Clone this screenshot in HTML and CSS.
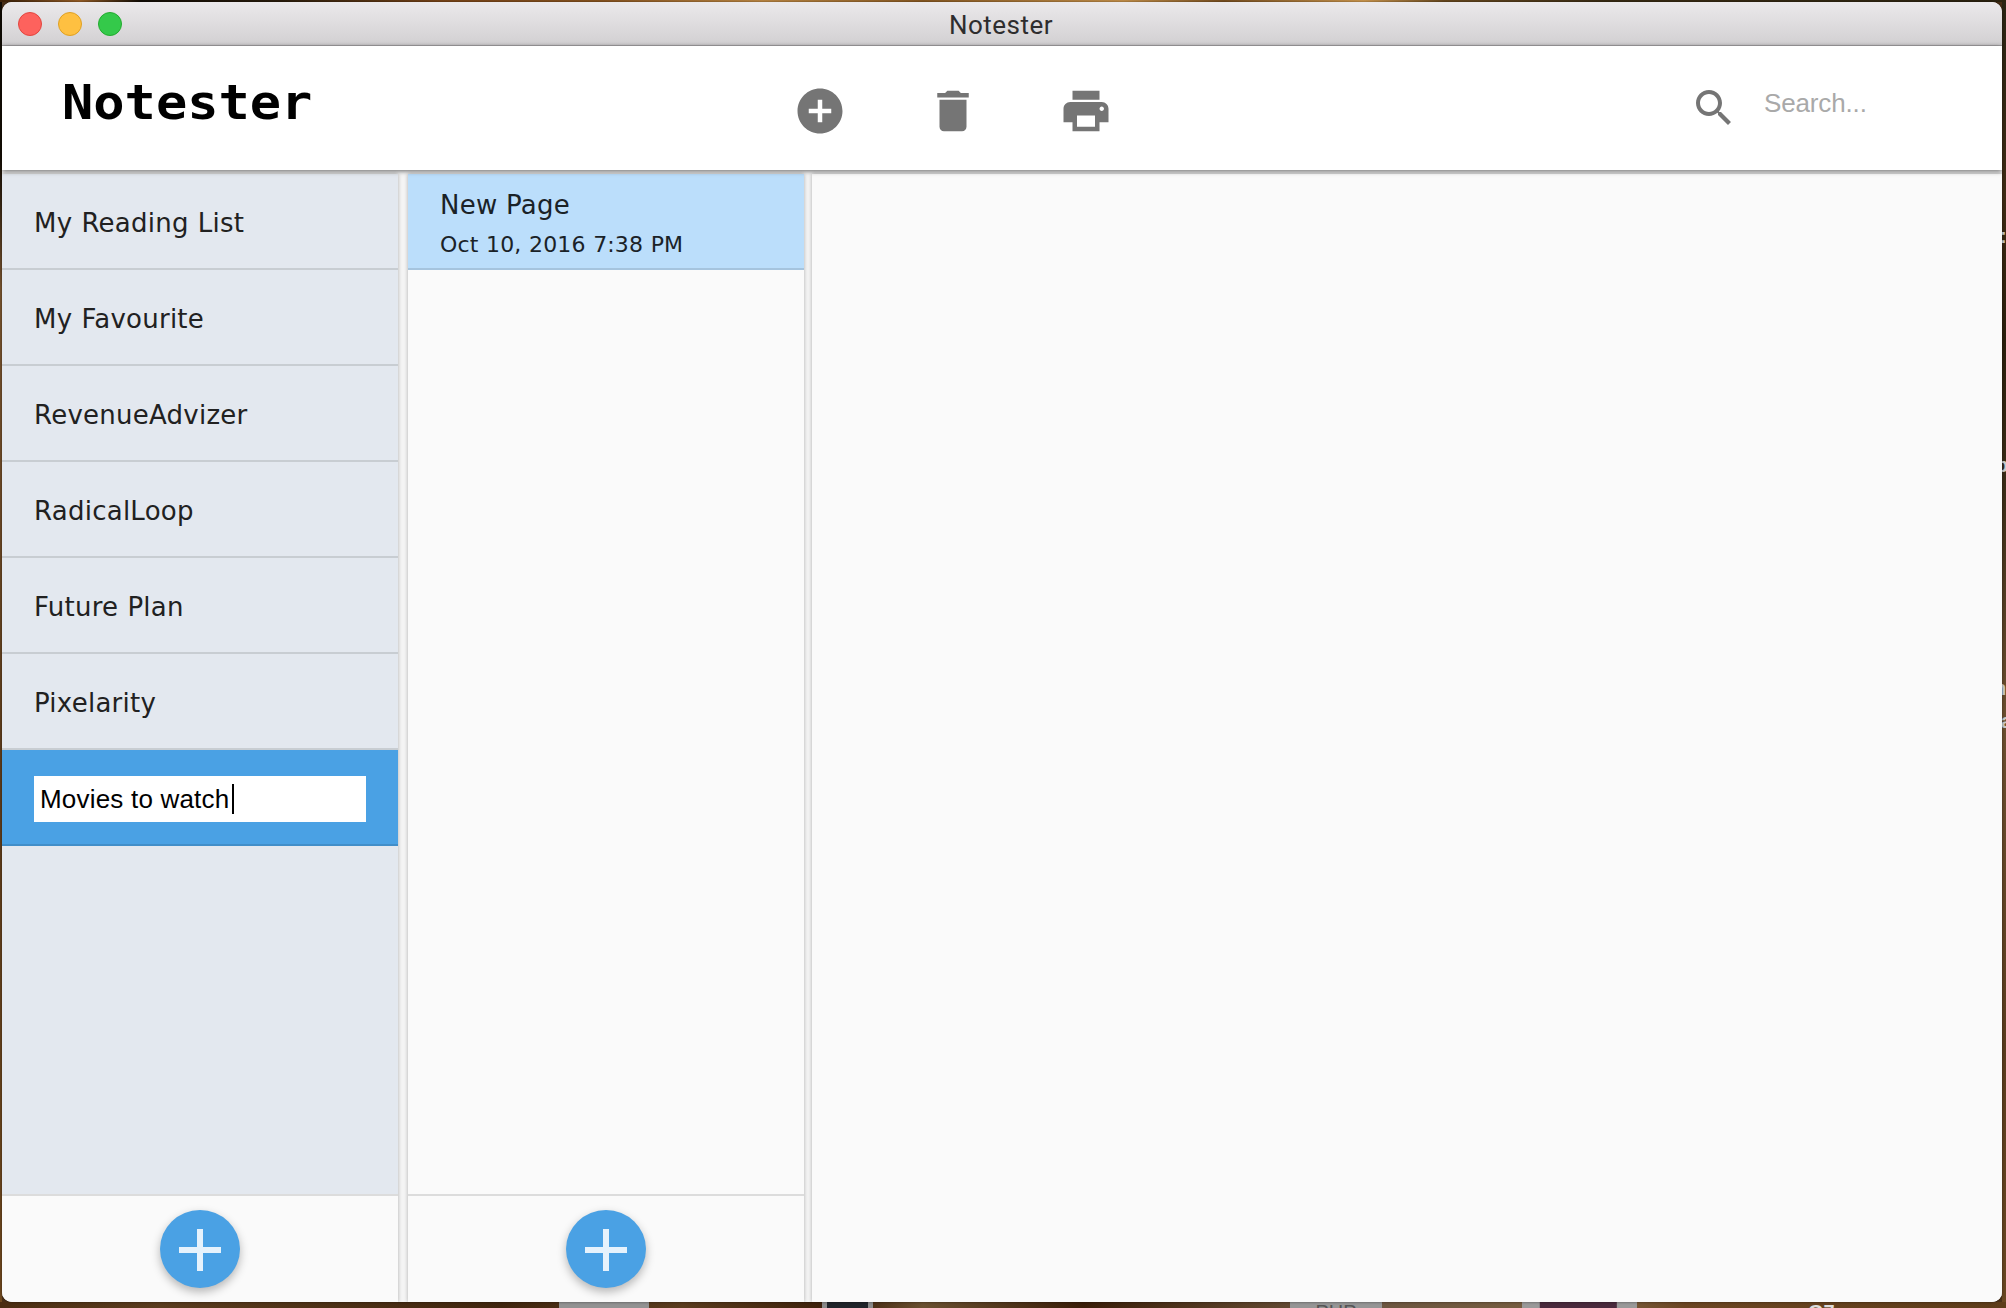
FILE: index.html
```html
<!DOCTYPE html>
<html lang="en">
<head>
<meta charset="utf-8">
<title>Notester</title>
<link rel="stylesheet" href="styles.css">
</head>
<body>
<div class="behind"><span class="b1">:</span><span class="b2">p</span><span class="b3">n</span><span class="b4">a</span><span class="b5">PHP</span><span class="b6"></span><span class="b7"></span><span class="b8"></span><span class="b9">G7</span></div>
<div class="window">
  <div class="titlebar">
    <div class="lights"><i class="close"></i><i class="min"></i><i class="max"></i></div>
    <div class="caption">Notester</div>
  </div>
  <header class="header">
    <h1 class="brand">Notester</h1>
    <nav class="tools">
      <svg viewBox="0 0 24 24"><path d="M12 2C6.48 2 2 6.48 2 12s4.48 10 10 10 10-4.480 10-10S17.520 2 12 2zm5 11h-4v4h-2v-4H7v-2h4V7h2v4h4v2z"/></svg>
      <svg viewBox="0 0 24 24"><path d="M6 19c0 1.100.900 2 2 2h8c1.100 0 2-.900 2-2V7H6v12zM19 4h-3.500l-1-1h-5l-1 1H5v2h14V4z"/></svg>
      <svg viewBox="0 0 24 24"><path d="M19 8H5c-1.660 0-3 1.340-3 3v6h4v4h12v-4h4v-6c0-1.660-1.340-3-3-3zm-3 11H8v-5h8v5zm3-7c-.550 0-1-.450-1-1s.450-1 1-1 1 .450 1 1-.450 1-1 1zm-1-9H6v4h12V3z"/></svg>
    </nav>
    <div class="search">
      <svg viewBox="0 0 24 24"><path d="M15.500 14h-.790l-.280-.270C15.410 12.590 16 11.110 16 9.500 16 5.910 13.090 3 9.500 3S3 5.910 3 9.500 5.910 16 9.500 16c1.610 0 3.090-.590 4.230-1.570l.270.280v.790l5 4.990L20.490 19l-4.990-5zm-6 0C7.010 14 5 11.990 5 9.500S7.010 5 9.500 5 14 7.010 14 9.500 11.990 14 9.500 14z"/></svg>
      <span class="placeholder">Search...</span>
    </div>
  </header>
  <main class="panes">
    <section class="pane notebooks">
      <ul class="list">
        <li>My Reading List</li>
        <li>My Favourite</li>
        <li>RevenueAdvizer</li>
        <li>RadicalLoop</li>
        <li>Future Plan</li>
        <li>Pixelarity</li>
        <li class="editing"><div class="field"><span>Movies to watch</span><i class="caret"></i></div></li>
      </ul>
      <div class="footer"><div class="fab"><svg viewBox="0 0 42 42"><path d="M18 0h6v18h18v6H24v18h-6V24H0v-6h18z"/></svg></div></div>
    </section>
    <section class="pane pages">
      <ul class="list">
        <li class="page"><div class="name">New Page</div><div class="date">Oct 10, 2016 7:38 PM</div></li>
      </ul>
      <div class="footer"><div class="fab"><svg viewBox="0 0 42 42"><path d="M18 0h6v18h18v6H24v18h-6V24H0v-6h18z"/></svg></div></div>
    </section>
    <section class="pane editor"></section>
  </main>
</div>
</body>
</html>
```
FILE: styles.css
```css
* { box-sizing: border-box; }
body {
  margin: 0;
  width: 2006px;
  height: 1308px;
  padding: 2px 4px 6px 2px;
  overflow: hidden;
  position: relative;
  background:
    linear-gradient(90deg, #3a2008, #9a6028 4%, #120c05 7%, #2a1d0c 14%, #7a4518 22%, #8a5520 30%, #c08a45 38%, #8a5a22 46%, #c8934c 56%, #7a5020 61%, #d09a50 68%, #6a4a20 72%, #3a2c14 80%, #2c2310) 0 0 / 100% 2px no-repeat,
    linear-gradient(90deg, #4b2d12, #5a3c1e 8%, #40250e 25%, #5a3c1e 34%, #3a1d08 42%, #6a5030 46%, #3a1d08 54%, #5a4028 62%, #6b5540 68%, #7b6040 80%, #6b4522 84%, #5d3c19) 0 100% / 100% 6px no-repeat,
    linear-gradient(#2a2414, #3f2a14 15%, #2a1e0c 26%, #3d2d18 38%, #6d4f30 55%, #5a3c1e 80%, #6a4722) 100% 0 / 4px 100% no-repeat,
    linear-gradient(#0f0a03, #150e05 12%, #7a5530 22%, #5e3c1a 60%, #70491f) 0 0 / 2px 100% no-repeat,
    #4a3018;
}
.window {
  height: 1300px;
  display: flex;
  flex-direction: column;
  background: #fafafa;
  border-radius: 10px;
  overflow: hidden;
  position: relative;
  box-shadow: 0 0 3px rgba(0, 0, 0, .5);
}
.titlebar {
  height: 44px;
  flex: none;
  display: grid;
  grid-template-columns: 200px 1fr 200px;
  background: linear-gradient(#ebe9eb, #d2d0d2);
  border-bottom: 1px solid #acaaac;
}
.lights { display: flex; gap: 16px; padding: 10px 0 0 16px; }
.lights i { width: 24px; height: 24px; border-radius: 50%; border: 1px solid; }
.lights .close { background: #fd625d; border-color: #e2463f; }
.lights .min { background: #fec041; border-color: #dfa023; }
.lights .max { background: #34c94a; border-color: #23ab2f; }
.caption {
  text-align: center;
  padding-right: 2px;
  font: 26px/46px Roboto, sans-serif;
  letter-spacing: .5px;
  color: #2e2d2e;
}
.header {
  height: 124px;
  flex: none;
  display: grid;
  grid-template-columns: 791px 897px 1fr;
  background: #fff;
  box-shadow: 0 1px 5px rgba(0, 0, 0, .6);
  position: relative;
  z-index: 1;
}
.brand {
  margin: 0 0 0 60px;
  padding: 26px 0 0;
  font: bold 48px/60px "DejaVu Sans Mono", monospace;
  transform: scaleX(1.083);
  transform-origin: 0 0;
  color: #000;
}
.tools { display: flex; gap: 79px; padding-top: 38px; }
.tools svg { width: 54px; height: 54px; fill: #757575; }
.search { display: flex; gap: 26px; padding-top: 38px; }
.search svg { width: 48px; height: 48px; fill: #757575; }
.placeholder { font: 26px/38px "Liberation Sans", sans-serif; color: #a9a9a9; letter-spacing: -.15px; }
.panes { flex: 1; display: flex; padding-top: 4px; background: #f5f5f5; }
.pane { display: flex; flex-direction: column; background: #fafafa; box-shadow: 0 0 4px rgba(0, 0, 0, .3); }
.notebooks { width: 396px; margin-right: 10px; }
.pages { width: 396px; margin-right: 8px; }
.editor { flex: 1; }
.list { flex: 1; margin: 0; padding: 0; list-style: none; }
.notebooks .list { background: #e3e8ef; }
.list li {
  height: 96px;
  padding: 0 32px;
  border-bottom: 2px solid #c8cdd2;
  font: 26px/99px "DejaVu Sans", sans-serif;
  letter-spacing: .25px;
  word-spacing: .6px;
  color: #212121;
}
.list .editing { padding-top: 26px; background: #4aa1e4; border-color: #418ec9; }
.field {
  width: 332px;
  height: 46px;
  display: flex;
  padding-left: 6px;
  background: #fff;
  color: #000;
  font: 26px/46px "Liberation Sans", sans-serif;
  letter-spacing: .2px;
  word-spacing: 0;
}
.field span { width: 192px; white-space: nowrap; }
.caret { width: 2px; height: 30px; margin-top: 8px; background: #000; }
.list .page { padding-top: 12px; background: #bbdefb; border-color: #a5c4de; color: #1a2227; }
.name { font-size: 26px; line-height: 38px; word-spacing: 0; }
.date { font-size: 22px; line-height: 42px; letter-spacing: .15px; word-spacing: .4px; }
.footer { height: 108px; flex: none; border-top: 2px solid #dcdcdc; padding-top: 14px; }
.fab {
  width: 80px;
  height: 78px;
  margin: 0 auto;
  border-radius: 50%;
  background: #4aa1e4;
  box-shadow: 0 4px 10px rgba(0, 0, 0, .28);
  display: flex;
  justify-content: center;
  padding-top: 19px;
}
.fab svg { width: 42px; height: 42px; fill: #e6f2fc; }
.behind { position: absolute; inset: 0; overflow: hidden; font: bold 20px/20px "Liberation Sans", sans-serif; color: #ccc; }
.behind span { position: absolute; }
.b1 { left: 2000px; top: 226px; }
.b2 { left: 1996px; top: 455px; }
.b3 { left: 1994px; top: 678px; }
.b4 { left: 2001px; top: 711px; }
.behind .b5 { left: 1290px; top: 1302px; width: 92px; height: 20px; text-align: center; background: #959595; color: #555; font-weight: normal; }
.b6 { left: 559px; top: 1302px; width: 90px; height: 6px; background: #929292; }
.b7 { left: 822px; top: 1302px; width: 51px; height: 6px; background: #20242a; border: solid #8a8a8a; border-width: 0 5px; }
.b8 { left: 1522px; top: 1302px; width: 115px; height: 6px; background: linear-gradient(90deg, #999 15%, #4a2a3d 16% 82%, #999 83%); }
.behind .b9 { left: 1808px; top: 1302px; color: #ddd; }
```
